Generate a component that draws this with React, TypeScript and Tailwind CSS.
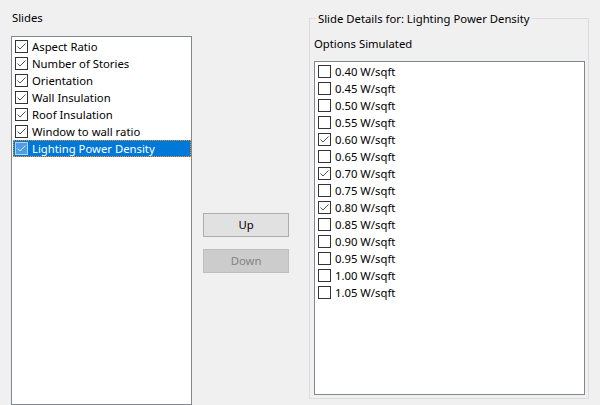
import { useState } from "react";

type Row = { label: string; checked: boolean };

const slides: Row[] = [
  { label: "Aspect Ratio", checked: true },
  { label: "Number of Stories", checked: true },
  { label: "Orientation", checked: true },
  { label: "Wall Insulation", checked: true },
  { label: "Roof Insulation", checked: true },
  { label: "Window to wall ratio", checked: true },
  { label: "Lighting Power Density", checked: true },
];

const options: Row[] = [
  "0.40", "0.45", "0.50", "0.55", "0.60", "0.65", "0.70",
  "0.75", "0.80", "0.85", "0.90", "0.95", "1.00", "1.05",
].map((v) => ({
  label: `${v} W/sqft`,
  checked: v === "0.60" || v === "0.70" || v === "0.80",
}));

const CheckBox = ({ checked, selected }: { checked: boolean; selected?: boolean }) => (
  <svg width="13" height="13" viewBox="0 0 13 13" className="shrink-0">
    <rect
      x="0.5"
      y="0.5"
      width="12"
      height="12"
      fill={selected ? "#4f9de4" : "#ffffff"}
      stroke={selected ? "#b4d4f1" : "#333333"}
    />
    {checked && (
      <path
        d="M2.5 6.5 L5 9 L10.5 3.5"
        fill="none"
        stroke={selected ? "#d6e6f5" : "#555555"}
        strokeWidth="1"
      />
    )}
  </svg>
);

export default function App() {
  const [selected, setSelected] = useState<number>(6);

  return (
    <div
      className="flex w-[600px] h-[405px] overflow-hidden bg-[#f0f0f0] pl-[11px] text-[11.3px] text-black"
      style={{ fontFamily: '"Noto Sans", "Open Sans", sans-serif' }}
    >
      <div className="flex flex-col w-[181px] shrink-0">
        <div className="h-[36px] pt-[9px] pl-px leading-[17px]">Slides</div>
        <div className="flex-1 bg-white border border-[#828790] pt-px">
          {slides.map((row, i) => (
            <div
              key={row.label}
              onClick={() => setSelected(i)}
              className={
                i === selected
                  ? "flex items-center gap-[4px] h-[17px] ml-px pl-[2px] bg-[#0078d7] text-white outline-1 outline-dotted outline-[#f7931e] -outline-offset-1"
                  : "flex items-center gap-[4px] h-[17px] pl-[3px]"
              }
            >
              <CheckBox checked={row.checked} selected={i === selected} />
              <span className="leading-[17px] whitespace-nowrap">{row.label}</span>
            </div>
          ))}
        </div>
      </div>

      <div className="flex flex-col gap-[12px] ml-[11px] pt-[213px] w-[86px] shrink-0">
        <button
          type="button"
          className="h-[24px] bg-[#e1e1e1] border border-[#adadad] leading-[20px]"
        >
          Up
        </button>
        <button
          type="button"
          disabled
          className="h-[24px] bg-[#cccccc] border border-[#bfbfbf] text-[#838383] leading-[20px]"
        >
          Down
        </button>
      </div>

      <div className="relative ml-[20px] mt-[18px] w-[280px] h-[381px] shrink-0 border border-[#dcdcdc] pl-[4px] pr-[3px] pb-[3px] flex flex-col">
        <span className="absolute -top-[9px] left-[6px] px-[2px] bg-[#f0f0f0] leading-[17px] whitespace-nowrap">
          Slide Details for: Lighting Power Density
        </span>
        <div className="pt-[16px] h-[33px] leading-[17px] mb-[9px]">Options Simulated</div>
        <div className="flex-1 bg-white border border-[#828790] pt-px">
          {options.map((row) => (
            <div key={row.label} className="flex items-center gap-[4px] h-[17px] pl-[3px]">
              <CheckBox checked={row.checked} />
              <span className="leading-[17px] whitespace-nowrap">{row.label}</span>
            </div>
          ))}
        </div>
      </div>
    </div>
  );
}
